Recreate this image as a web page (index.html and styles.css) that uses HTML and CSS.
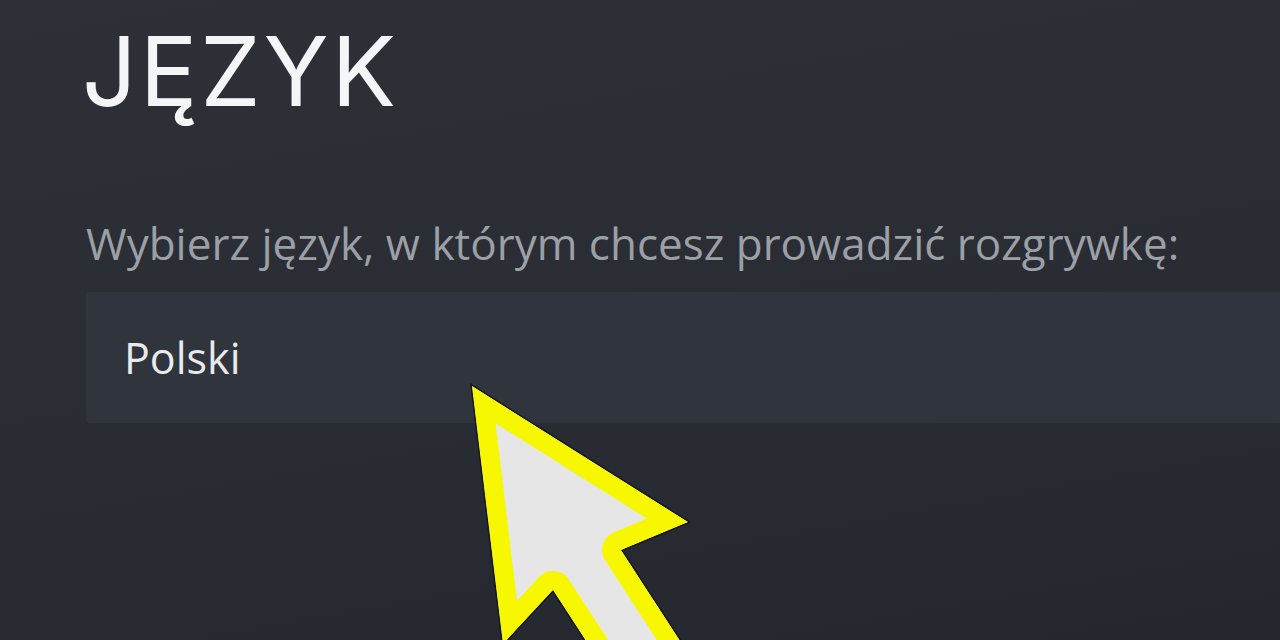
FILE: index.html
```html
<!DOCTYPE html>
<html lang="pl">
<head>
    <meta charset="UTF-8">
    <meta name="viewport" content="width=device-width, initial-scale=1.0">
    <title>Język</title>
    <link rel="stylesheet" href="styles.css">
</head>
<body>
    <main class="settings">
        <h1 class="section-title">JĘZYK</h1>
        <p class="field-label">Wybierz język, w którym chcesz prowadzić rozgrywkę:</p>
        <div class="dropdown">
            <span class="dropdown-value">Polski</span>
        </div>
    </main>

    <!-- Pointer annotation drawn over the screenshot -->
    <svg class="pointer" width="1280" height="640" viewBox="0 0 1280 640" aria-hidden="true">
        <defs>
            <clipPath id="arrowClip">
                <polygon points="472,386 688,522 621,550 712,690 618,690 553,590 503,644"/>
            </clipPath>
        </defs>
        <polygon points="472,386 688,522 621,550 712,690 618,690 553,590 503,644"
                 fill="none" stroke="#15161a" stroke-width="3" stroke-linejoin="miter"/>
        <polygon points="472,386 688,522 621,550 712,690 618,690 553,590 503,644"
                 fill="#e6e6e6" stroke="#f7f700" stroke-width="38" stroke-linejoin="round"
                 clip-path="url(#arrowClip)"/>
    </svg>
</body>
</html>
```

FILE: styles.css
```css
:root {
    --bg-top: #2d3037;
    --bg-bottom: #24272d;
    --panel: #30343c;
    --label: #9b9fa6;
    --text: #e8eaec;
}

* {
    margin: 0;
    padding: 0;
    box-sizing: border-box;
}

html, body {
    height: 100%;
}

body {
    font-family: 'Open Sans', 'Noto Sans', sans-serif;
    background: linear-gradient(170deg, var(--bg-top) 0%, #2a2d34 45%, var(--bg-bottom) 100%);
    color: var(--text);
    overflow: hidden;
    position: relative;
}

.settings {
    padding-left: 86px;
}

.section-title {
    margin-top: 21px;
    margin-left: -4px;
    font-family: Inter, 'Open Sans', sans-serif;
    font-size: 96px;
    font-weight: 400;
    line-height: 100px;
    letter-spacing: 0.03em;
    color: #f4f5f6;
}

.field-label {
    margin-top: 100px;
    font-size: 44px;
    line-height: 44px;
    color: var(--label);
}

.dropdown {
    margin-top: 27px;
    height: 131px;
    display: flex;
    align-items: center;
    padding-left: 38px;
    background: var(--panel);
    border-radius: 4px 0 0 4px;
}

.dropdown-value {
    font-size: 43px;
    line-height: 43px;
    color: var(--text);
}

.pointer {
    position: absolute;
    top: 0;
    left: 0;
    pointer-events: none;
}
```
